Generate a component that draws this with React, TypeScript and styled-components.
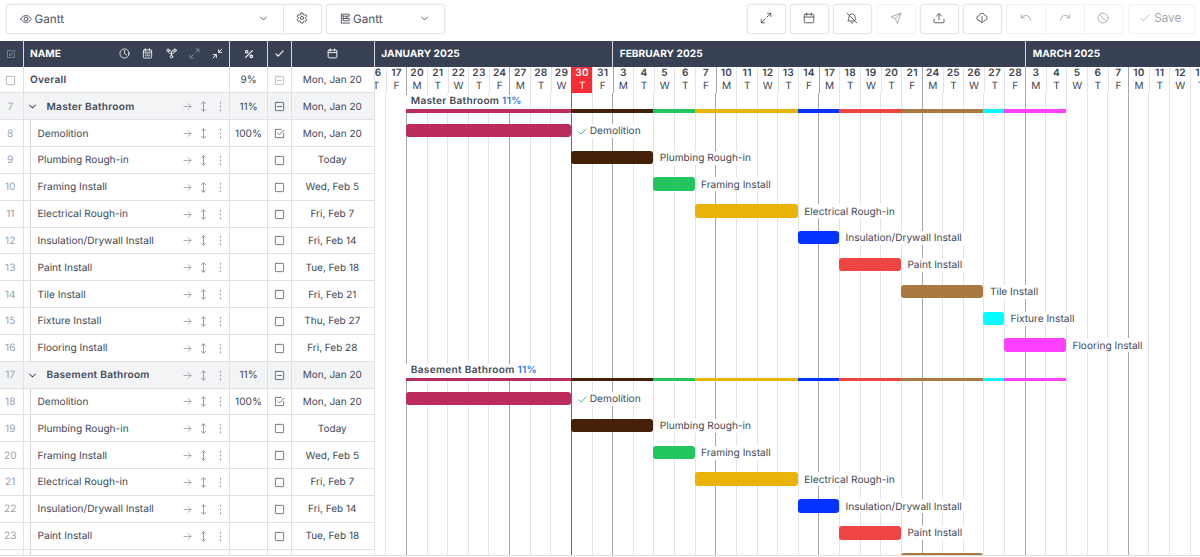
import React from "react";
import styled, { createGlobalStyle } from "styled-components";

const Global = createGlobalStyle`
  *, *::before, *::after { box-sizing: border-box; }
  html, body { margin: 0; padding: 0; overflow: hidden; }
  body {
    background: #fff;
    font-family: Inter, "Liberation Sans", sans-serif;
    color: #414856;
    font-size: 10.15px;
    text-rendering: geometricPrecision;
  }
`;

const ROW = 26.84;
const DAY = 20.63;

const Page = styled.div`
  width: 1200px;
  height: 557px;
  display: flex;
  flex-direction: column;
  overflow: hidden;
  background: #fff;
`;

/* ---------- toolbar ---------- */

const Toolbar = styled.div`
  flex: none;
  height: 40.6px;
  padding: 3.5px 5px 0 5.5px;
  display: flex;
  align-items: flex-start;
  gap: 4px;
`;

const Group = styled.div<{ $disabled?: boolean }>`
  height: 30px;
  display: flex;
  border-radius: 3px;
  background: #fff;
  border: 1px solid ${(p) => (p.$disabled ? "#f3f3f5" : "#e6e6ea")};
  box-shadow: 0 0 1.5px ${(p) => (p.$disabled ? "rgba(0,0,0,.03)" : "rgba(0,0,0,.1)")};
  color: ${(p) => (p.$disabled ? "#a4a7ad" : "#4b5058")};
`;

const ToolButton = styled.button<{ $w: number }>`
  width: ${(p) => p.$w}px;
  padding: 0 1px 1px 0;
  border: 0;
  background: none;
  color: inherit;
  display: flex;
  align-items: center;
  justify-content: center;
  gap: 4px;
  font: 400 11.7px Inter, sans-serif;
  & + & { border-left: 1px solid #f1f1f3; }
`;

const Picker = styled.div<{ $w: number; $l: number; $r: number }>`
  width: ${(p) => p.$w}px;
  padding: 0 ${(p) => p.$r}px 0 ${(p) => p.$l}px;
  display: flex;
  align-items: center;
  gap: 2.5px;
  font-size: 11.7px;
  color: #4b5260;
  & + button { border-left: 1px solid #e7e7eb; }
`;

const Grow = styled.div`
  flex: 1;
`;

const Tools = styled.div`
  display: flex;
  gap: 4.3px;
`;

/* ---------- task table ---------- */

const Main = styled.div`
  flex: none;
  height: 515px;
  display: flex;
  overflow: hidden;
  border-bottom: 1px solid #dfe1e6;
`;

const Table = styled.div`
  flex: none;
  width: 374.6px;
`;

const columns = "23.5px 206.5px 38px 24px 82.6px";

const HeadRow = styled.div`
  height: 26px;
  display: grid;
  grid-template-columns: ${columns};
  background: #374153;
  color: #fff;
`;

const HeadCell = styled.div`
  display: flex;
  align-items: center;
  justify-content: center;
  border-right: 1px solid #d5d8dd;
`;

const NameHead = styled(HeadCell)`
  justify-content: flex-start;
  padding: 0 6px 0 6.5px;
  font-weight: 700;
`;

const HeadIcons = styled.div`
  margin-left: auto;
  display: flex;
  align-items: center;
  gap: 12.2px;
`;

const Row = styled.div<{ $group?: boolean }>`
  height: ${ROW}px;
  display: grid;
  grid-template-columns: ${columns};
  background: ${(p) => (p.$group ? "#f3f4f6" : "#fff")};
`;

const Cell = styled.div`
  display: flex;
  align-items: center;
  justify-content: center;
  padding-top: 1px;
  border-right: 1px solid #e0e1e5;
  border-bottom: 1px solid #e0e1e5;
  white-space: nowrap;
  min-width: 0;
`;

const DateCell = styled(Cell)`
  font-size: 10px;
  padding-right: 1px;
`;

const NumCell = styled(Cell)`
  color: #9ca0a8;
  padding-right: 2px;
`;

const NameCell = styled(Cell)<{ $strong?: boolean }>`
  justify-content: flex-start;
  padding-right: 3px;
  font-weight: ${(p) => (p.$strong ? 600 : 400)};
  letter-spacing: ${(p) => (p.$strong ? 0.25 : 0)}px;
`;

const Indent = styled.span`
  align-self: stretch;
  flex: none;
  width: 7.5px;
  margin: -1px 6.5px 0 0;
  border-right: 1px solid #d3d5da;
`;

const Toggle = styled.span`
  display: flex;
  width: 23px;
  padding-left: 4px;
`;

const Actions = styled.span`
  margin-left: auto;
  display: flex;
  align-items: center;
  gap: 6px;
  color: #92969f;
`;

const OverallName = styled.span`
  padding-left: 6.5px;
`;

/* ---------- timeline ---------- */

const Timeline = styled.div`
  flex: 1;
  min-width: 0;
  overflow: hidden;
`;

const Months = styled.div`
  height: 26px;
  display: flex;
  background: #374153;
`;

const Month = styled.div<{ $w: number }>`
  flex: none;
  width: ${(p) => p.$w}px;
  padding-left: 6.7px;
  display: flex;
  align-items: center;
  border-right: 1px solid #d5d8dd;
  color: #fff;
  font-weight: 700;
  letter-spacing: 0.05px;
  white-space: nowrap;
`;

const Days = styled.div`
  height: 26.8px;
  display: flex;
  margin-left: -9.5px;
`;

const Day = styled.div<{ $today?: boolean; $line: string }>`
  flex: none;
  width: ${DAY}px;
  display: flex;
  flex-direction: column;
  align-items: center;
  line-height: 13px;
  border-left: 1px solid ${(p) => (p.$today ? "#fb2c36" : p.$line)};
  background: ${(p) => (p.$today ? "#fb2c36" : "transparent")};
  color: ${(p) => (p.$today ? "#fff" : "#3d4452")};
  b { font-weight: 600; letter-spacing: 0.3px; }
`;

const Canvas = styled.div`
  position: relative;
  height: 480px;
`;

const Lines = styled.div`
  position: absolute;
  inset: 0;
  display: flex;
  margin-left: -9.9px;
`;

const Line = styled.div<{ $color: string }>`
  flex: none;
  width: ${DAY}px;
  border-left: 1px solid ${(p) => p.$color};
`;

const Lane = styled.div<{ $start: number }>`
  position: relative;
  height: ${ROW}px;
  padding: 3.5px 0 0 ${(p) => 31.2 + p.$start * DAY}px;
  display: flex;
  align-items: flex-start;
`;

const Bar = styled.div<{ $days: number; $color: string }>`
  flex: none;
  width: ${(p) => p.$days * DAY}px;
  height: 13.4px;
  border-radius: 3px;
  background: ${(p) => p.$color};
`;

const BarLabel = styled.div<{ $done?: boolean }>`
  margin-left: ${(p) => (p.$done ? 5.2 : 4.5)}px;
  height: 14px;
  padding: 0.6px 2px 0;
  display: flex;
  align-items: center;
  gap: 2.8px;
  background: #fff;
  white-space: nowrap;
`;

const GroupLane = styled(Lane)`
  flex-direction: column;
  padding-top: 2px;
`;

const GroupTitle = styled.div`
  height: 14px;
  line-height: 13.4px;
  padding-left: 5px;
  font-weight: 600;
  letter-spacing: 0.28px;
  white-space: nowrap;
  background: #fff;
  span { color: #2f7be0; }
`;

const Summary = styled.div`
  display: flex;
  height: 3.4px;
`;

const Segment = styled.div<{ $days: number; $color: string }>`
  width: ${(p) => p.$days * DAY}px;
  background: ${(p) => p.$color};
`;

/* ---------- icons ---------- */

const shapes: Record<string, React.ReactNode> = {
  eye: (<><path d="M1.500 12S5 5 12 5s10.500 7 10.500 7S19 19 12 19 1.500 12 1.500 12z" /><circle cx="12" cy="12" r="3.800" /></>),
  down: <path d="M4 8l8 8 8-8" />,
  gear: (<><path d="M10 2h4l.7 3 2 1.200 3-1 2 3.500-2.300 2.100v2.400l2.300 2.100-2 3.500-3-1-2 1.200-.7 3h-4l-.7-3-2-1.200-3 1-2-3.500 2.300-2.100v-2.400L2.300 8.700l2-3.500 3 1 2-1.200z" /><circle cx="12" cy="12" r="3.200" /></>),
  gantt: (<><path d="M3 2v20h18" /><path d="M7 2.500h13v4.500H7zM7 7v5h8V7M7 12v5h13v-5H7z" /></>),
  expand: (<><path d="M14 10l7.500-7.500M15 2.500h6.500V9M10 14l-7.500 7.500M2.500 15v6.500H9" /></>),
  shrink: (<><path d="M21.500 2.500L14.500 9.500M14.500 3.500v6H21M2.500 21.500l7-7M3 14.500h6.500V21" /></>),
  calendar: (<><rect x="2.500" y="4.500" width="19" height="17" rx="2" /><path d="M2.500 10h19M7.500 2v4.500M16.500 2v4.500" /></>),
  calDots: (<><rect x="3" y="4" width="18" height="18" rx="2" /><path d="M3 9h18M7.500 1.500v4M16.500 1.500v4M7 13h2M11 13h2M15 13h2M7 17h2M11 17h2M15 17h2" /></>),
  bellOff: (<><path d="M8 5.200A6 6 0 0 1 18 9.500c0 2.500.5 4.500 1.300 6M16.500 18H3.500s2.500-2 2.500-8.500c0-.7.100-1.300.3-2M9.500 21a3 3 0 0 0 5 0M2 2l20 20" /></>),
  send: <path d="M21.500 2.500L2 9.500l8.500 4 4 8.500zM21.500 2.500l-11 11" />,
  upload: <path d="M2 14.500v5.500a1.500 1.500 0 0 0 1.500 1.500h17A1.500 1.500 0 0 0 22 20v-5.500M12 16V3M7 8l5-5 5 5" />,
  cloud: (<><path d="M7.500 17.500H6.500a5 5 0 0 1-.9-9.900A6.500 6.500 0 0 1 18 7a5 5 0 0 1 .5 9.800L17 17" /><path d="M12 9.500v12M8.800 18.300l3.200 3.200 3.200-3.200" /></>),
  undo: <path d="M2.500 5.500v6H9M3 11c2-2.500 5-4 8.500-4 5 0 8.500 3.500 10 9" />,
  redo: <path d="M21.500 5.500v6H15M21 11c-2-2.500-5-4-8.500-4-5 0-8.500 3.500-10 9" />,
  ban: (<><circle cx="12" cy="12" r="10" /><path d="M5 5l14 14" /></>),
  check: <path d="M2.500 13l6 6L21.500 5" />,
  edit: (<><path d="M12 3.500H3.500v17h17V12" /><path d="M8.500 15.500l1-4.500L18.500 2l3.500 3.500-9 9z" /></>),
  clock: (<><circle cx="12" cy="12" r="10" /><path d="M12 5.500V12l4.500 3" /></>),
  nodes: (<><circle cx="4.500" cy="5" r="2.800" /><circle cx="19.500" cy="5" r="2.800" /><circle cx="12" cy="19" r="2.800" /><path d="M5.500 8c.5 3.500 3 4.500 6.500 4.500s6-1 6.500-4.500M7.500 5c2.500 0 4.500 2 4.500 4.500v6.500M16.500 5c-2.500 0-4.500 2-4.500 4.500" /></>),
  percent: (<><circle cx="6.500" cy="6.500" r="3" /><circle cx="17.500" cy="17.500" r="3" /><path d="M20 4L4 20" /></>),
  box: <rect x="3" y="3" width="18" height="18" rx="1.500" />,
  boxMinus: (<><rect x="3" y="3" width="18" height="18" rx="1.500" /><path d="M7.500 12h9" /></>),
  boxCheck: (<><path d="M21 12v9H3V3h13" /><path d="M8 11l4 4L22 4.500" /></>),
  right: <path d="M2.500 12h19M13.500 4.500l8 7.500-8 7.500" />,
  vert: <path d="M12 2v20M7.500 6L12 1.500 16.500 6M7.500 18l4.500 4.500 4.500-4.500" />,
  dots: <path d="M12 3v1.500M12 11.200v1.500M12 19.500V21" />,
};

const Svg = styled.svg`
  flex: none;
  display: block;
  fill: none;
  stroke: currentColor;
  stroke-linecap: round;
  stroke-linejoin: round;
`;

const Icon = ({ name, size = 12, w = 1.8, color }: { name: string; size?: number; w?: number; color?: string }) => (
  <Svg width={size} height={size} viewBox="0 0 24 24" strokeWidth={w} color={color}>
    {shapes[name]}
  </Svg>
);

/* ---------- data ---------- */

const tasks = [
  { name: "Demolition", start: 0, days: 8, color: "#b92c5b", date: "Mon, Jan 20", done: true },
  { name: "Plumbing Rough-in", start: 8, days: 4, color: "#432006", date: "Today" },
  { name: "Framing Install", start: 12, days: 2, color: "#22c55e", date: "Wed, Feb 5" },
  { name: "Electrical Rough-in", start: 14, days: 5, color: "#eab308", date: "Fri, Feb 7" },
  { name: "Insulation/Drywall Install", start: 19, days: 2, color: "#0433ff", date: "Fri, Feb 14" },
  { name: "Paint Install", start: 21, days: 3, color: "#ef4444", date: "Tue, Feb 18" },
  { name: "Tile Install", start: 24, days: 4, color: "#aa7942", date: "Fri, Feb 21" },
  { name: "Fixture Install", start: 28, days: 1, color: "#00fdff", date: "Thu, Feb 27" },
  { name: "Flooring Install", start: 29, days: 3, color: "#ff40ff", date: "Fri, Feb 28" },
];

const groups = [
  { name: "Master Bathroom", first: 7, tasks, next: null },
  { name: "Basement Bathroom", first: 17, tasks: tasks.slice(0, 6), next: tasks[6] },
];

const dates = [
  16, 17, 20, 21, 22, 23, 24, 27, 28, 29, 30, 31, 3, 4, 5, 6, 7, 10, 11, 12, 13, 14, 17, 18, 19, 20, 21, 24, 25, 26,
  27, 28, 3, 4, 5, 6, 7, 10, 11, 12, 13,
];
const letters = "MTWTF";
const days = dates.map((n, i) => ({ n, letter: letters[(i + 3) % 5], monday: (i + 3) % 5 === 0, today: i === 10 }));

const RowActions = () => (
  <Actions>
    <Icon name="right" size={9} w={2} />
    <Icon name="vert" size={11} w={2} />
    <Icon name="dots" size={11} w={2.6} />
  </Actions>
);

const TaskTable = () => (
  <Table>
    <HeadRow>
      <HeadCell><Icon name="edit" size={10} color="#8b93a1" /></HeadCell>
      <NameHead>
        NAME
        <HeadIcons>
          <Icon name="clock" size={11} />
          <Icon name="calDots" size={11} />
          <Icon name="nodes" size={11} w={2} />
          <Icon name="expand" size={11} color="#8b93a1" />
          <Icon name="shrink" size={11} w={2} />
        </HeadIcons>
      </NameHead>
      <HeadCell><Icon name="percent" size={10} w={2.8} /></HeadCell>
      <HeadCell><Icon name="check" size={9} w={2.8} /></HeadCell>
      <HeadCell><Icon name="calendar" size={11} w={2} /></HeadCell>
    </HeadRow>
    <Row>
      <NumCell><Icon name="box" size={11} color="#a7abb2" /></NumCell>
      <NameCell $strong><OverallName>Overall</OverallName></NameCell>
      <Cell>9%</Cell>
      <Cell><Icon name="boxMinus" size={11} color="#b3b6bc" /></Cell>
      <DateCell>Mon, Jan 20</DateCell>
    </Row>
    {groups.map((g) => (
      <React.Fragment key={g.first}>
        <Row $group>
          <NumCell>{g.first}</NumCell>
          <NameCell $strong>
            <Toggle><Icon name="down" size={9} w={2.8} /></Toggle>
            {g.name}
            <RowActions />
          </NameCell>
          <Cell>11%</Cell>
          <Cell><Icon name="boxMinus" size={11} w={2} color="#5b616c" /></Cell>
          <DateCell>Mon, Jan 20</DateCell>
        </Row>
        {g.tasks.map((t, i) => (
          <Row key={t.name}>
            <NumCell>{g.first + 1 + i}</NumCell>
            <NameCell>
              <Indent />
              {t.name}
              <RowActions />
            </NameCell>
            <Cell>{t.done ? "100%" : ""}</Cell>
            <Cell><Icon name={t.done ? "boxCheck" : "box"} size={11} w={2} color="#6a6f79" /></Cell>
            <DateCell>{t.date}</DateCell>
          </Row>
        ))}
      </React.Fragment>
    ))}
    <Row>
      <NumCell />
      <NameCell><Indent /></NameCell>
      <Cell />
      <Cell />
      <Cell />
    </Row>
  </Table>
);

const lineColor = (d: { monday: boolean; today: boolean }) => {
  if (d.today) return "#fb2c36";
  return d.monday ? "#a4a7ae" : "#e4e4e8";
};

const Chart = () => (
  <Timeline>
    <Months>
      <Month $w={238.4}>JANUARY 2025</Month>
      <Month $w={413}>FEBRUARY 2025</Month>
      <Month $w={413}>MARCH 2025</Month>
    </Months>
    <Days>
      {days.map((d, i) => (
        <Day key={i} $today={d.today} $line={lineColor(d)}>
          <b>{d.n}</b>
          <span>{d.letter}</span>
        </Day>
      ))}
    </Days>
    <Canvas>
      <Lines>
        {days.map((d, i) => (
          <Line key={i} $color={lineColor(d)} />
        ))}
      </Lines>
      {groups.map((g) => (
        <React.Fragment key={g.first}>
          <GroupLane $start={0}>
            <GroupTitle>{g.name} <span>11%</span></GroupTitle>
            <Summary>
              {tasks.map((t) => (
                <Segment key={t.name} $days={t.days} $color={t.color} />
              ))}
            </Summary>
          </GroupLane>
          {g.tasks.map((t) => (
            <Lane key={t.name} $start={t.start}>
              <Bar $days={t.days} $color={t.color} />
              <BarLabel $done={t.done}>
                {t.done && <Icon name="check" size={9} w={2.4} color="#2fb380" />}
                {t.name}
              </BarLabel>
            </Lane>
          ))}
          {g.next && (
            <Lane $start={g.next.start}>
              <Bar $days={g.next.days} $color={g.next.color} />
            </Lane>
          )}
        </React.Fragment>
      ))}
    </Canvas>
  </Timeline>
);

export default function App() {
  return (
    <Page>
      <Global />
      <Toolbar>
        <Group>
          <Picker $w={276.5} $l={13.5} $r={15}>
            <Icon name="eye" size={12} />Gantt<Grow /><Icon name="down" size={9} w={2.4} />
          </Picker>
          <ToolButton $w={38}><Icon name="gear" size={12} /></ToolButton>
        </Group>
        <Group>
          <Picker $w={116.5} $l={12.5} $r={14.5}>
            <Icon name="gantt" size={11} w={2} /><span>Gantt</span><Grow /><Icon name="down" size={9} w={2.4} />
          </Picker>
        </Group>
        <Grow />
        <Tools>
          <Group><ToolButton $w={36.9}><Icon name="expand" /></ToolButton></Group>
          <Group><ToolButton $w={36.9}><Icon name="calendar" /></ToolButton></Group>
          <Group><ToolButton $w={36.9}><Icon name="bellOff" /></ToolButton></Group>
          <Group $disabled><ToolButton $w={36.9}><Icon name="send" /></ToolButton></Group>
          <Group><ToolButton $w={36.9}><Icon name="upload" /></ToolButton></Group>
          <Group><ToolButton $w={36.9}><Icon name="cloud" /></ToolButton></Group>
          <Group $disabled>
            <ToolButton $w={38}><Icon name="undo" /></ToolButton>
            <ToolButton $w={39}><Icon name="redo" /></ToolButton>
            <ToolButton $w={38}><Icon name="ban" /></ToolButton>
          </Group>
          <Group $disabled><ToolButton $w={65.5}><Icon name="check" size={10} />Save</ToolButton></Group>
        </Tools>
      </Toolbar>
      <Main>
        <TaskTable />
        <Chart />
      </Main>
    </Page>
  );
}
